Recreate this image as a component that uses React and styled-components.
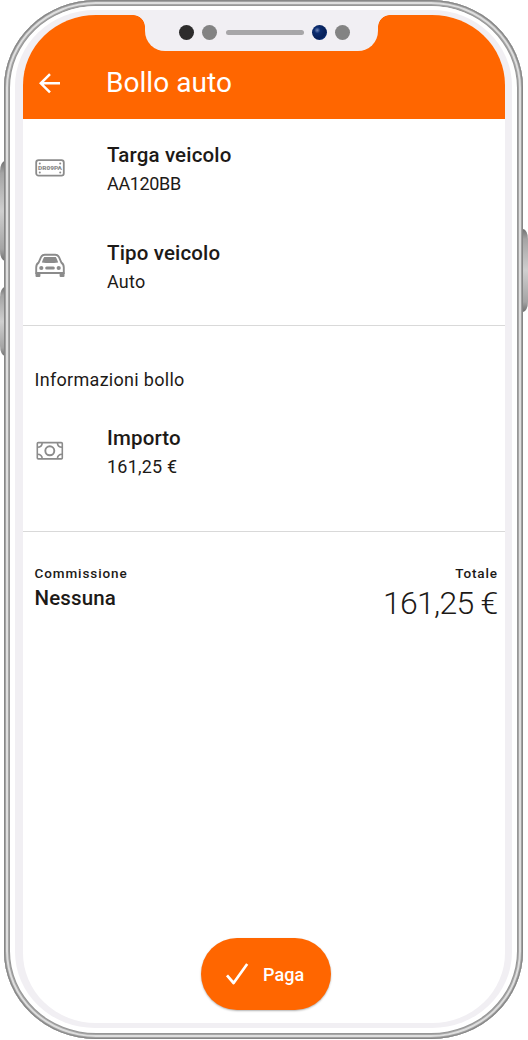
import React from "react";
import styled, { createGlobalStyle } from "styled-components";

const orange = "#ff6600";
const bezel = "#f1eff3";
const ink = "#1d1a17";

const GlobalStyle = createGlobalStyle`
  * {
    box-sizing: border-box;
  }
  body {
    margin: 0;
    background: white;
    font-family: Roboto, sans-serif;
    color: ${ink};
  }
`;

const Device = styled.div`
  display: flex;
  width: 528px;
  height: 1040px;
  overflow: hidden;
`;

const Side = styled.div`
  display: flex;
  flex-direction: column;
  flex: none;
  width: ${({ right }) => (right ? "5px" : "4px")};
  padding-top: ${({ right }) => (right ? "229px" : "161px")};
  gap: 26px;
`;

const SideButton = styled.div`
  width: 5px;
  height: ${({ size }) => size}px;
  border-radius: ${({ right }) => (right ? "0 5px 5px 0 / 0 10px 10px 0" : "5px 0 0 5px / 10px 0 0 10px")};
  background: linear-gradient(
    #707070,
    #a4a4a4 12%,
    #cfcfcf 50%,
    #a4a4a4 88%,
    #707070
  );
`;

const Rim = styled.div`
  flex: 1;
  height: 1039px;
  padding: 6px 7px 7px;
  border-radius: 92px / 88px;
  background: white;
  box-shadow: inset 0 0 0 1px #868686, inset 0 0 0 2px #a2a2a2,
    inset 0 0 0 4px #dedede, inset 0 0 0 5px #a6a6a6, inset 0 0 0 6px #979797;
`;

const Body = styled.div`
  height: 100%;
  padding: 4px;
  border-radius: 86px / 82px;
  background: white;
`;

const Bezel = styled.div`
  height: 100%;
  padding: 5px 7px 5px 8px;
  border-radius: 80px / 76px;
  background: ${bezel};
`;

const Screen = styled.div`
  position: relative;
  display: flex;
  flex-direction: column;
  height: 100%;
  overflow: hidden;
  border-radius: 73px / 70px;
  background: white;
`;

// Notch =========================

const Notch = styled.div`
  position: absolute;
  top: 0;
  left: 122px;
  display: flex;
  align-items: center;
  width: 233px;
  height: 36px;
  padding: 0 27px 1px 34px;
  border-radius: 0 0 20px 20px;
  background: ${bezel};
  &::before,
  &::after {
    content: "";
    position: absolute;
    top: 0;
    width: 12px;
    height: 12px;
  }
  &::before {
    right: 100%;
    background: radial-gradient(
      circle at 0 100%,
      transparent 11.5px,
      ${bezel} 12.2px
    );
  }
  &::after {
    left: 100%;
    background: radial-gradient(
      circle at 100% 100%,
      transparent 11.5px,
      ${bezel} 12.2px
    );
  }
`;

const Dot = styled.span`
  flex: none;
  width: 15px;
  height: 15px;
  margin-right: 8px;
  border-radius: 50%;
  background: ${({ fill }) => fill};
`;

const Speaker = styled.span`
  flex: none;
  width: 78px;
  height: 5px;
  margin: 0 8px 0 1px;
  border-radius: 3px;
  background: #a7a6a8;
`;

// Content =========================

const Header = styled.header`
  display: flex;
  flex: none;
  align-items: flex-start;
  height: 104px;
  padding: 50px 0 0 14px;
  background: ${orange};
  color: white;
  svg {
    margin-top: 6px;
  }
`;

const Title = styled.h1`
  margin: 0 0 0 45px;
  font-size: 28px;
  font-weight: 400;
  line-height: 36px;
  letter-spacing: 0.05px;
`;

const Section = styled.section`
  display: flex;
  flex-direction: column;
  flex: none;
  height: ${({ height }) => height}px;
  padding: ${({ top }) => top}px 8px 0 11px;
  border-bottom: 1px solid #d9d9d9;
`;

const Row = styled.div`
  display: flex;
  height: 58px;
  margin-bottom: 40px;
  svg {
    flex: none;
    margin: 12px 42.5px 0 0.5px;
  }
`;

const Label = styled.div`
  font-size: 20.5px;
  font-weight: 500;
  line-height: 30px;
  letter-spacing: 0.15px;
`;

const Value = styled.div`
  font-size: 18px;
  line-height: 28px;
  letter-spacing: ${({ spacing }) => spacing || "0.2px"};
`;

const SectionTitle = styled.h2`
  margin: 0 0 29px;
  padding: 1px 0 0 0.5px;
  font-size: 18px;
  font-weight: 400;
  line-height: 28px;
  letter-spacing: 0.3px;
`;

const Summary = styled.div`
  display: flex;
  justify-content: space-between;
  padding: 31px 7.5px 0 11.5px;
`;

const Amount = styled.div`
  text-align: ${({ align }) => align || "left"};
`;

const Caption = styled.div`
  font-size: 13.5px;
  font-weight: 500;
  line-height: 20px;
  letter-spacing: 0.9px;
  margin-right: ${({ flush }) => (flush ? "-0.5px" : 0)};
`;

const Fee = styled(Label)`
  margin-top: 1px;
  line-height: 28px;
`;

const Total = styled.div`
  font-size: 32px;
  font-weight: 300;
  line-height: 40px;
  letter-spacing: -0.75px;
`;

const PayButton = styled.button`
  display: flex;
  align-items: center;
  width: 130px;
  height: 72px;
  margin: auto auto 13px 178px;
  padding: 0 0 0 24px;
  border: none;
  border-radius: 36px;
  background: ${orange};
  box-shadow: 0 1px 2px rgba(0, 0, 0, 0.3);
  color: white;
  font: 500 18px Roboto, sans-serif;
  letter-spacing: 0.1px;
  svg {
    margin-right: 14px;
  }
`;

const BackIcon = () => (
  <svg width="24" height="24" viewBox="0 0 24 24" fill="none">
    <path
      d="M23 12.3H4M13 3.2L3.8 12.3L13 21.4"
      stroke="white"
      strokeWidth="2.5"
    />
  </svg>
);

const PlateIcon = () => (
  <svg width="30" height="32" viewBox="0 0 30 32">
    <rect x="1.2" y="8.2" width="27.6" height="15.4" rx="2.4" fill="none" stroke="#8b8b8b" strokeWidth="1.8" />
    <g fill="#8b8b8b">
      <circle cx="4.8" cy="11.5" r="1" />
      <circle cx="25.2" cy="11.5" r="1" />
      <circle cx="4.8" cy="20.5" r="1" />
      <circle cx="25.2" cy="20.5" r="1" />
      <text
        x="3"
        y="18"
        fontFamily="Roboto, sans-serif"
        fontSize="5.8"
        fontWeight="900"
        textLength="24"
        lengthAdjust="spacingAndGlyphs"
      >
        DR09PA
      </text>
    </g>
  </svg>
);

const CarIcon = () => (
  <svg width="30" height="32" viewBox="0 0 30 32">
    <path
      d="M3.6 12.6L6 7.2Q7.1 4.7 9.8 4.7H20.2Q22.9 4.7 24 7.2L26.4 12.6Q28.8 14.2 28.8 17.5V23H1.2V17.5Q1.2 14.2 3.6 12.6Z"
      fill="none"
      stroke="#8b8b8b"
      strokeWidth="1.9"
    />
    <g fill="#8b8b8b">
      <path d="M9.2 7H20.8Q22.3 9.3 23.2 12.4Q15 13.7 6.8 12.4Q7.7 9.3 9.2 7Z" />
      <circle cx="6.3" cy="18" r="2.1" />
      <circle cx="23.7" cy="18" r="2.1" />
      <rect x="10.2" y="16.6" width="9.6" height="3" rx="1.5" />
      <path d="M0.5 22.5H5.4V26Q5.4 27 4.4 27H1.5Q0.5 27 0.5 26ZM24.6 22.5H29.5V26Q29.5 27 28.5 27H25.6Q24.6 27 24.6 26Z" />
    </g>
  </svg>
);

const MoneyIcon = () => (
  <svg width="30" height="32" viewBox="0 0 30 32" fill="none" stroke="#8b8b8b" strokeWidth="1.6">
    <rect x="2.3" y="7.6" width="25" height="16.3" rx="1" />
    <circle cx="14.8" cy="15.8" r="4.5" strokeWidth="1.9" />
    <path d="M2.3 12.3C5.3 12.3 7.2 10.4 7.2 7.6M22.4 7.6C22.4 10.4 24.3 12.3 27.3 12.3M2.3 19.2C5.3 19.2 7.2 21.1 7.2 23.9M22.4 23.9C22.4 21.1 24.3 19.2 27.3 19.2" />
  </svg>
);

const CheckIcon = () => (
  <svg width="24" height="24" viewBox="0 0 24 24" fill="none">
    <path d="M2 13.3L8.6 21L22.2 2" stroke="white" strokeWidth="2.7" strokeLinejoin="round" />
  </svg>
);

const Item = ({ icon, label, value, spacing }) => (
  <Row>
    {icon}
    <div>
      <Label>{label}</Label>
      <Value spacing={spacing}>{value}</Value>
    </div>
  </Row>
);

export default function App() {
  return (
    <Device>
      <GlobalStyle />
      <Side>
        <SideButton size={100} />
        <SideButton size={69} />
      </Side>
      <Rim>
        <Body>
          <Bezel>
            <Screen>
              <Header>
                <BackIcon />
                <Title>Bollo auto</Title>
              </Header>
              <Section height={207} top={21}>
                <Item icon={<PlateIcon />} label="Targa veicolo" value="AA120BB" spacing="-0.35px" />
                <Item icon={<CarIcon />} label="Tipo veicolo" value="Auto" />
              </Section>
              <Section height={206} top={39}>
                <SectionTitle>Informazioni bollo</SectionTitle>
                <Item icon={<MoneyIcon />} label="Importo" value="161,25 €" />
              </Section>
              <Summary>
                <Amount>
                  <Caption>Commissione</Caption>
                  <Fee>Nessuna</Fee>
                </Amount>
                <Amount align="right">
                  <Caption flush>Totale</Caption>
                  <Total>161,25 €</Total>
                </Amount>
              </Summary>
              <PayButton>
                <CheckIcon />
                Paga
              </PayButton>
              <Notch>
                <Dot fill="#2d2c2c" />
                <Dot fill="#838383" />
                <Speaker />
                <Dot fill="radial-gradient(circle at 35% 35%, #6f86b8 0, #0b2c6f 22%, #061f57 60%, #0b44a8)" />
                <Dot fill="#838383" />
              </Notch>
            </Screen>
          </Bezel>
        </Body>
      </Rim>
      <Side right>
        <SideButton right size={83} />
      </Side>
    </Device>
  );
}
